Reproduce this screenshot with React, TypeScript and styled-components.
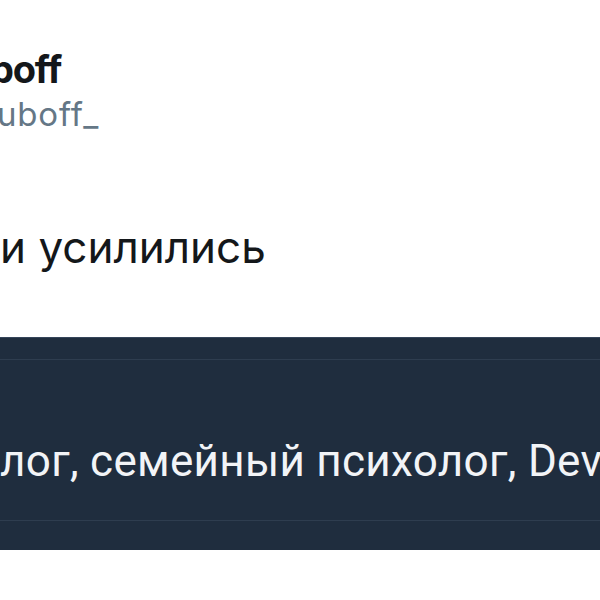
import React from "react";
import styled, { createGlobalStyle } from "styled-components";

const GlobalStyle = createGlobalStyle`
  html, body {
    margin: 0;
    padding: 0;
    background: #ffffff;
  }
  body {
    width: 600px;
    height: 600px;
    overflow: hidden;
  }
`;

const App = () => {
  return (
    <>
      <GlobalStyle />
      <Page>
        <Header>
          <Name>boff</Name>
          <Handle>uboff_</Handle>
        </Header>
        <TweetText>и усилились</TweetText>
        <Card>
          <Strip $height={21} />
          <Divider />
          <CardBody>
            <CardText>лог, семейный психолог, Dev</CardText>
          </CardBody>
          <Divider />
          <Strip $height={29} />
        </Card>
      </Page>
    </>
  );
};

export default App;

const Page = styled.div`
  width: 600px;
  height: 600px;
  overflow: hidden;
  display: flex;
  flex-direction: column;
  padding-top: 49px;
  box-sizing: border-box;
  font-family: Inter, "Liberation Sans", sans-serif;
`;

const Header = styled.div`
  display: flex;
  flex-direction: column;
  gap: 5px;
`;

const Name = styled.div`
  font-size: 38px;
  line-height: 40px;
  font-weight: 700;
  letter-spacing: -1.2px;
  color: #14171a;
  margin-left: -10px;
  white-space: nowrap;
`;

const Handle = styled.div`
  font-size: 33px;
  line-height: 40px;
  letter-spacing: 0.8px;
  color: #657786;
  margin-left: -3px;
  white-space: nowrap;
`;

const TweetText = styled.div`
  margin-top: 87px;
  font-size: 44px;
  line-height: 52px;
  color: #14171a;
  white-space: nowrap;
`;

const Card = styled.div`
  margin-top: 64px;
  width: 600px;
  background: #1f2d3e;
  border-top: 1px solid #35455a;
  display: flex;
  flex-direction: column;
`;

const Strip = styled.div<{ $height: number }>`
  height: ${(p) => p.$height}px;
`;

const Divider = styled.div`
  height: 1px;
  background: #2e3d4f;
`;

const CardBody = styled.div`
  height: 160px;
  padding-top: 75px;
  box-sizing: border-box;
  overflow: hidden;
`;

const CardText = styled.div`
  font-family: Roboto, "Noto Sans", sans-serif;
  font-size: 44px;
  line-height: 52px;
  letter-spacing: 0.3px;
  color: #f2f4f7;
  white-space: nowrap;
`;
